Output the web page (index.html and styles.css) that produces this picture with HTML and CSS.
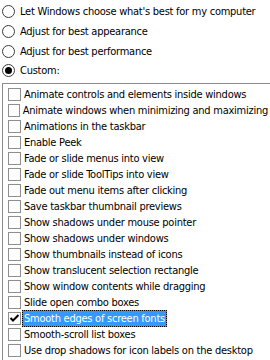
FILE: index.html
```html
<!DOCTYPE html>
<html><head>
<meta charset="utf-8">
<link rel="stylesheet" href="styles.css">
</head><body>

<!--Visual effects options-->

<div class="choices">
	<div class="choice"><span class="radio"></span><span>Let Windows choose what's best for my computer</span></div>
	<div class="choice"><span class="radio"></span><span>Adjust for best appearance</span></div>
	<div class="choice"><span class="radio"></span><span>Adjust for best performance</span></div>
	<div class="choice"><span class="radio on"></span><span>Custom:</span></div>
</div>

<div class="effects">
	<div class="item"><span class="box"></span><span class="name">Animate controls and elements inside windows</span></div>
	<div class="item"><span class="box"></span><span class="name">Animate windows when minimizing and maximizing</span></div>
	<div class="item"><span class="box"></span><span class="name">Animations in the taskbar</span></div>
	<div class="item"><span class="box"></span><span class="name">Enable Peek</span></div>
	<div class="item"><span class="box"></span><span class="name">Fade or slide menus into view</span></div>
	<div class="item"><span class="box"></span><span class="name">Fade or slide ToolTips into view</span></div>
	<div class="item"><span class="box"></span><span class="name">Fade out menu items after clicking</span></div>
	<div class="item"><span class="box"></span><span class="name">Save taskbar thumbnail previews</span></div>
	<div class="item"><span class="box"></span><span class="name">Show shadows under mouse pointer</span></div>
	<div class="item"><span class="box"></span><span class="name">Show shadows under windows</span></div>
	<div class="item"><span class="box"></span><span class="name">Show thumbnails instead of icons</span></div>
	<div class="item"><span class="box"></span><span class="name">Show translucent selection rectangle</span></div>
	<div class="item"><span class="box"></span><span class="name">Show window contents while dragging</span></div>
	<div class="item"><span class="box"></span><span class="name">Slide open combo boxes</span></div>
	<div class="item selected"><span class="box"><svg width="11" height="11" viewBox="0 0 11 11"><polyline points="1.5,5 4,7.5 9.5,2" fill="none" stroke="#000" stroke-width="2"/></svg></span><span class="name">Smooth edges of screen fonts</span></div>
	<div class="item"><span class="box"></span><span class="name">Smooth-scroll list boxes</span></div>
	<div class="item"><span class="box"></span><span class="name">Use drop shadows for icon labels on the desktop</span></div>
</div>

</body></html>
```

FILE: styles.css
```css
html, body	{ margin:0;
		  padding:0;
		  overflow:hidden;
		  background:#fff;
}

body		{ font-family:"DejaVu Sans Condensed", "DejaVu Sans", sans-serif;
		  font-size:11px;
		  letter-spacing:-0.25px;
		  color:#000;
		  width:270px;
		  height:360px;
		  display:flex;
		  flex-direction:column;
}

div.choices	{ padding-top:2px;
		  padding-left:2px;
}

div.choice	{ display:flex;
		  align-items:center;
		  height:19.7px;
		  gap:5px;
}

span.radio	{ width:11px;
		  height:11px;
		  border:1px solid #3c3c3c;
		  border-radius:50%;
		  background:#fff;
		  display:flex;
		  align-items:center;
		  justify-content:center;
}

span.radio.on::after	{ content:"";
			  width:7px;
			  height:7px;
			  border-radius:50%;
			  background:#000;
}

div.effects	{ flex:1;
		  margin-top:2px;
		  margin-left:2px;
		  border-top:1px solid #8c8c8c;
		  border-left:1px solid #8c8c8c;
		  padding-top:3px;
		  overflow:hidden;
}

div.item	{ display:flex;
		  align-items:center;
		  height:16px;
		  padding-left:5px;
}

span.box	{ width:11px;
		  height:11px;
		  border:1px solid #8e8e8e;
		  background:#fff;
		  display:flex;
		  align-items:center;
		  justify-content:center;
		  margin-right:1px;
}

span.name	{ padding:1px 1px;
		  border:1px solid transparent;
		  white-space:nowrap;
}

div.selected span.name	{ background:#3399ff;
			  color:#fff;
			  border:1px dotted #000;
}
```
